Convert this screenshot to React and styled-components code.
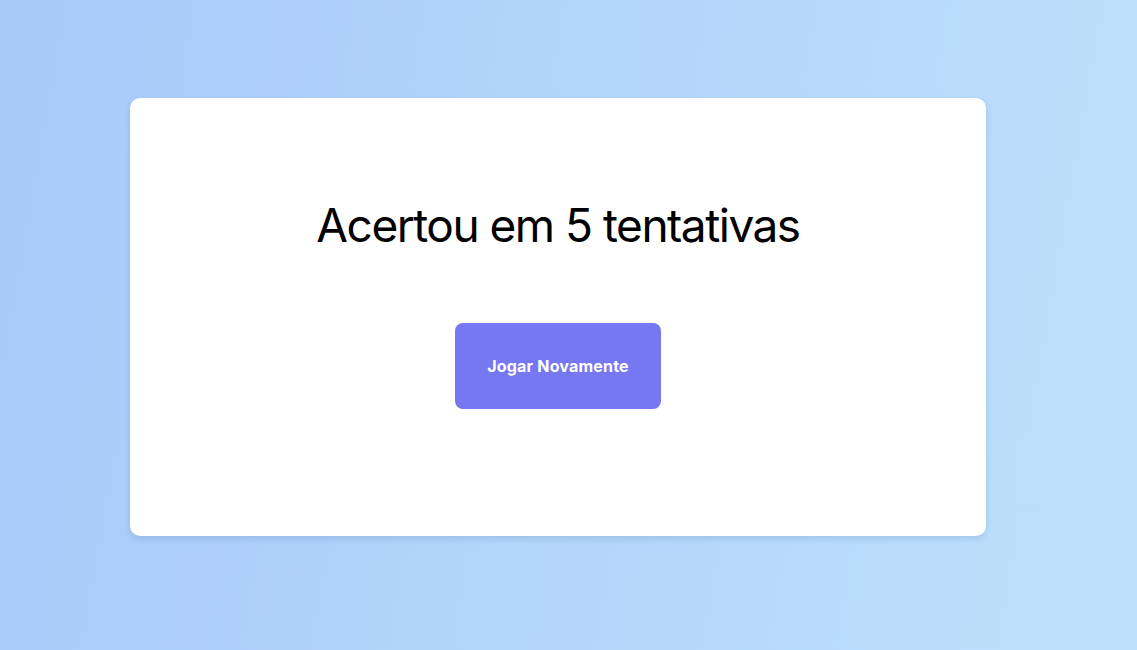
import React from "react";
import styled, { createGlobalStyle } from "styled-components";

const Global = createGlobalStyle`
  html, body { margin: 0; padding: 0; }
  body {
    min-height: 650px;
    background: linear-gradient(100deg, #a7c9f9 0%, #b1d4fa 45%, #bde1fb 100%);
    font-family: Inter, "DejaVu Sans", sans-serif;
  }
`;

const Page = styled.main`
  min-height: 650px;
  box-sizing: border-box;
  padding: 98px 151px 0 130px;
`;

const Card = styled.section`
  background: #ffffff;
  border-radius: 10px;
  height: 438px;
  box-shadow: 0 3px 6px rgba(60, 100, 160, 0.18);
  display: flex;
  flex-direction: column;
  align-items: center;
  box-sizing: border-box;
  padding-top: 99px;
`;

const Title = styled.h1`
  margin: 0;
  font-family: Inter, sans-serif;
  font-weight: 400;
  font-size: 46px;
  line-height: 56px;
  letter-spacing: -1.5px;
  color: #000;
`;

const Button = styled.button`
  margin-top: 70px;
  width: 206px;
  height: 86px;
  border: none;
  border-radius: 8px;
  background: #7678f2;
  color: #fff;
  font-family: Inter, sans-serif;
  font-weight: 700;
  font-size: 16px;
  letter-spacing: 0.2px;
  cursor: pointer;
`;

export default function App() {
  return (
    <>
      <Global />
      <Page>
        <Card>
          <Title>Acertou em 5 tentativas</Title>
          <Button>Jogar Novamente</Button>
        </Card>
      </Page>
    </>
  );
}
